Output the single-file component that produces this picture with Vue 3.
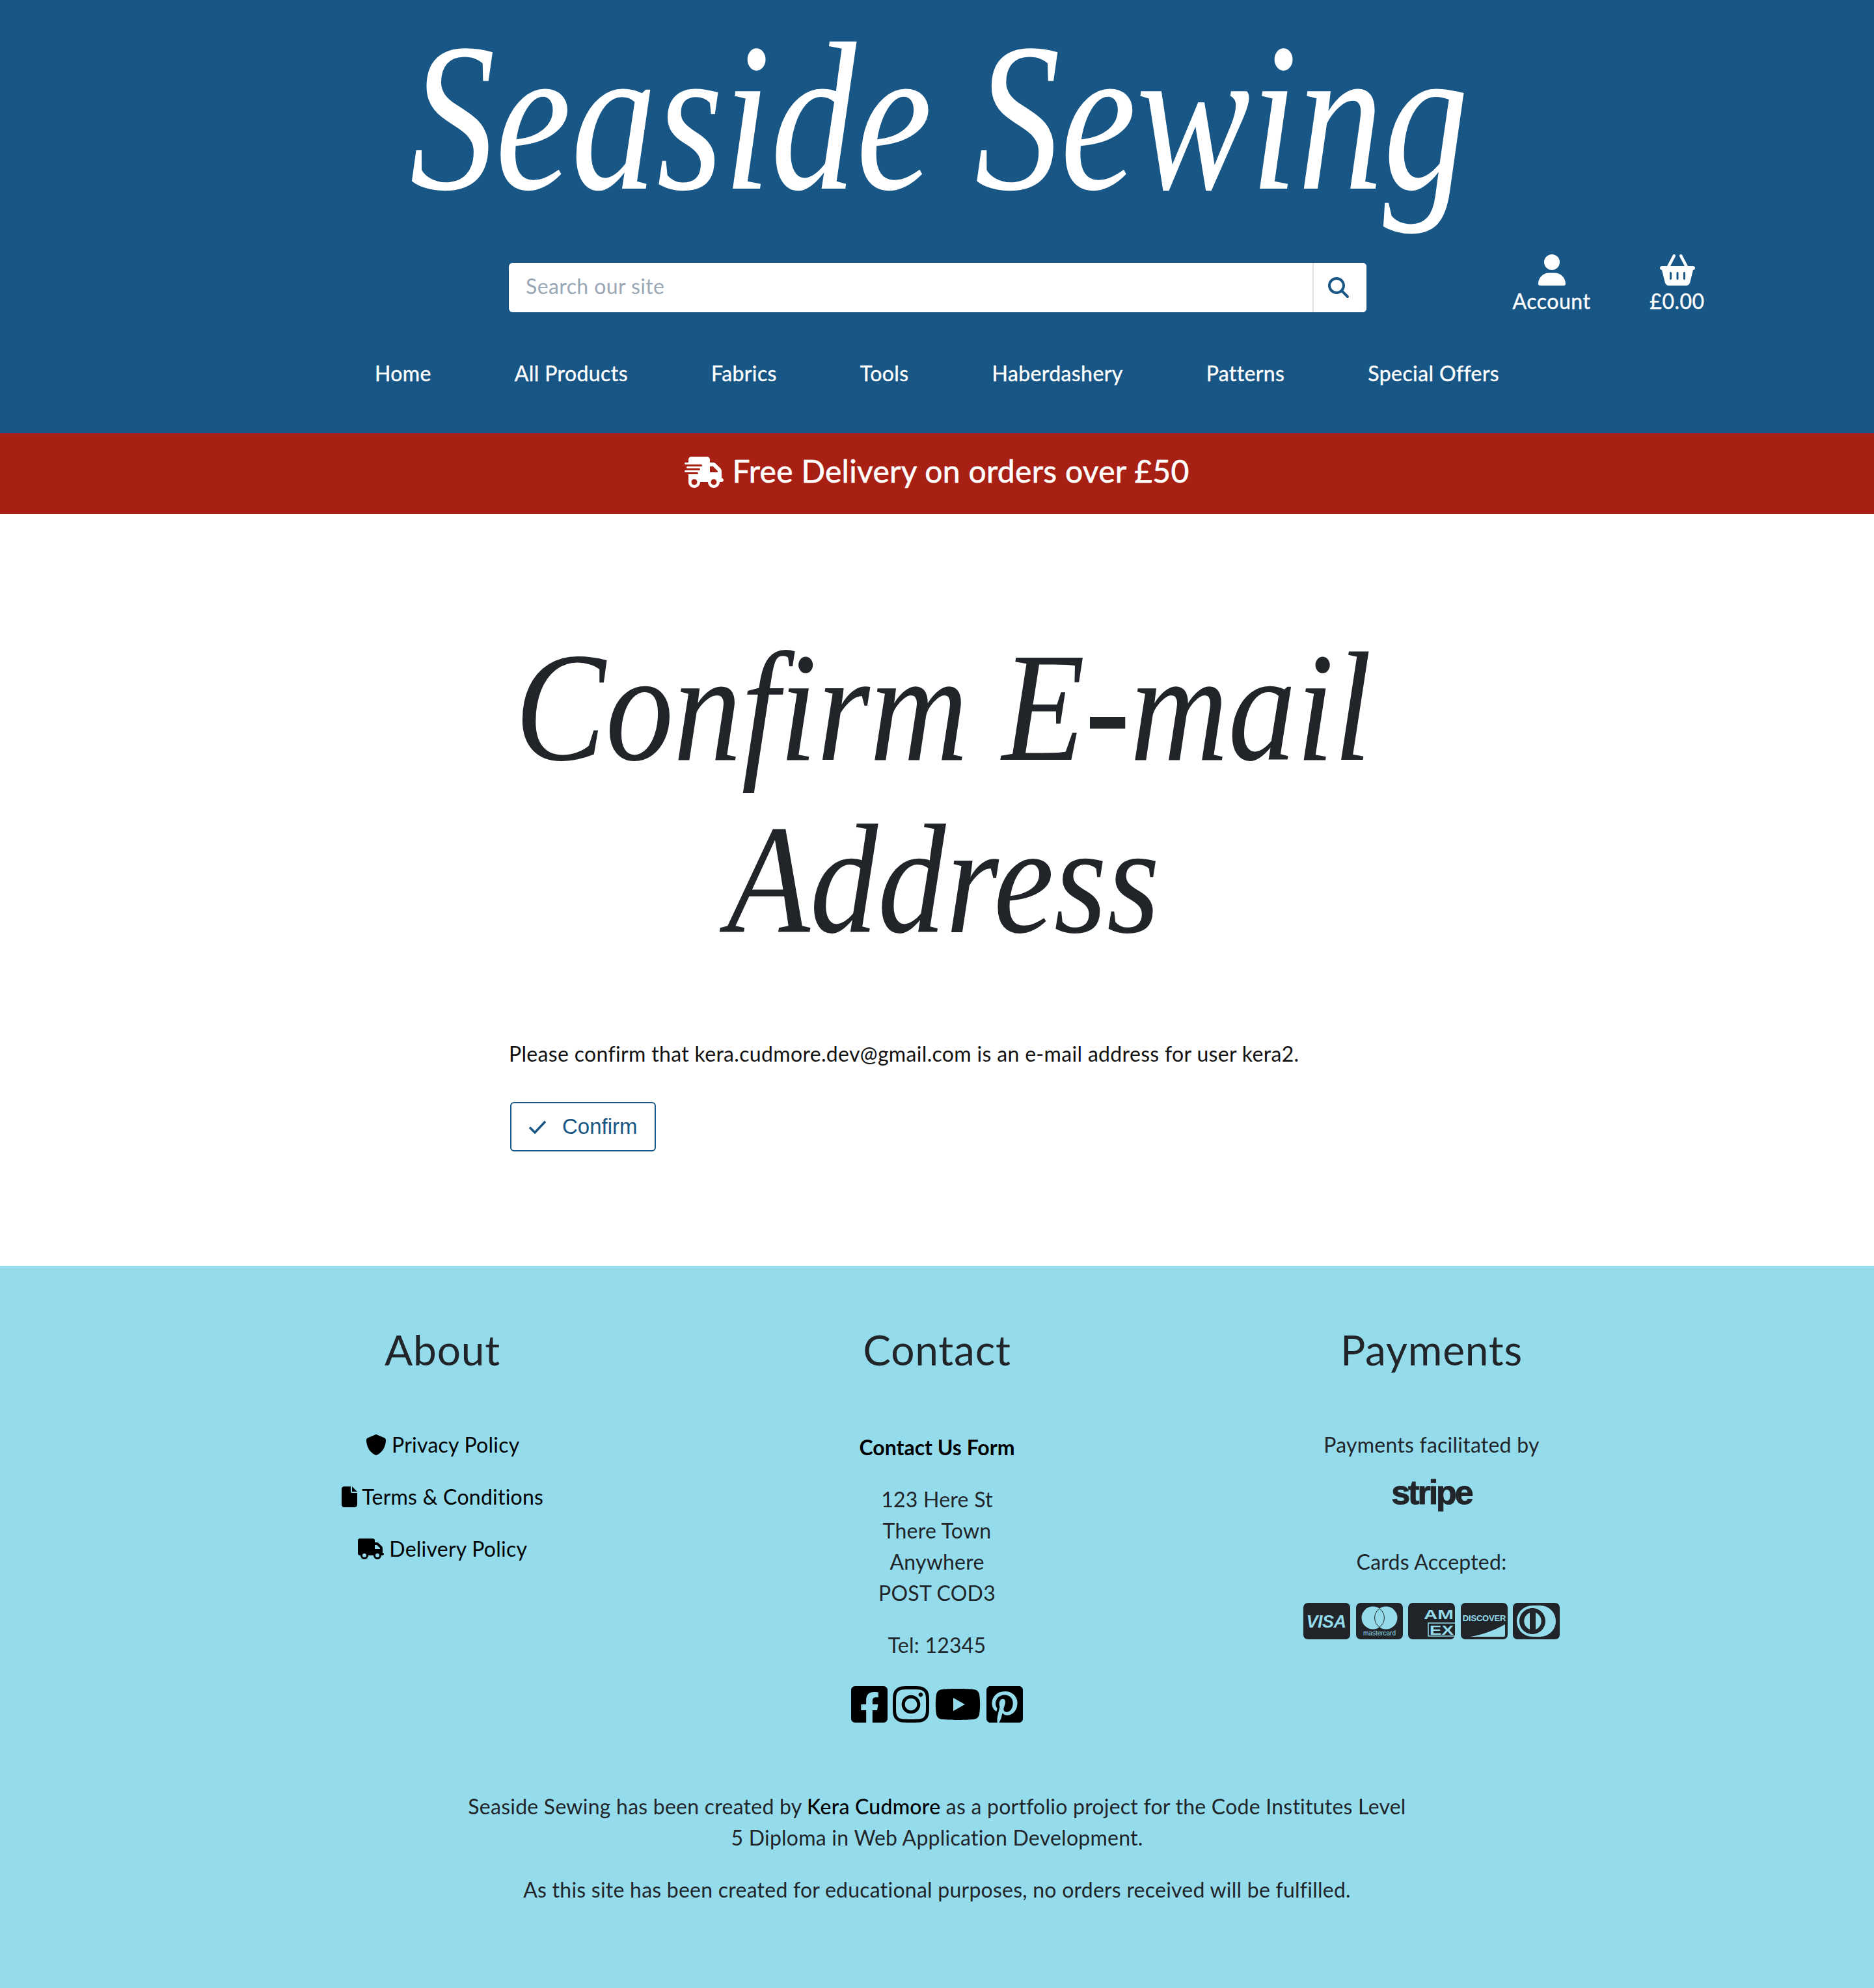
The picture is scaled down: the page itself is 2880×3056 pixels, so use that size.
<script setup>
const navItems = ['Home', 'All Products', 'Fabrics', 'Tools', 'Haberdashery', 'Patterns', 'Special Offers']
</script>

<template>
  <div class="page">
    <header class="site-header">
      <div class="logo-row"><a class="logo">Seaside Sewing</a></div>
      <div class="tools">
        <form class="search" @submit.prevent>
          <input class="search-input" type="text" placeholder="Search our site" />
          <button class="search-btn" type="button" aria-label="Search">
            <svg viewBox="0 0 512 512" class="search-icon"><path d="M416 208c0 45.9-14.9 88.3-40 122.7L502.6 457.4c12.5 12.5 12.5 32.8 0 45.3s-32.8 12.5-45.3 0L330.7 376c-34.4 25.2-76.8 40-122.7 40C93.1 416 0 322.9 0 208S93.1 0 208 0S416 93.1 416 208zM208 352a144 144 0 1 0 0-288 144 144 0 1 0 0 288z"/></svg>
          </button>
        </form>
        <div class="actions">
          <a class="action">
            <svg viewBox="0 0 448 512" class="action-icon user"><path d="M224 256A128 128 0 1 0 224 0a128 128 0 1 0 0 256zm-45.7 48C79.8 304 0 383.8 0 482.3C0 498.7 13.3 512 29.7 512H418.3c16.4 0 29.7-13.3 29.7-29.7C448 383.8 368.2 304 269.7 304H178.3z"/></svg>
            <span>Account</span>
          </a>
          <a class="action">
            <svg viewBox="0 0 576 512" class="action-icon basket"><path d="M253.3 35.1c6.1-11.8 1.5-26.3-10.2-32.4s-26.3-1.5-32.4 10.2L117.6 192H32c-17.7 0-32 14.3-32 32s14.3 32 32 32L83.9 463.5C91 492 116.6 512 146 512H430c29.4 0 55-20 62.1-48.5L544 256c17.7 0 32-14.3 32-32s-14.3-32-32-32H458.4L365.3 12.9C359.2 1.2 344.7-3.4 332.9 2.7s-16.3 20.6-10.2 32.4L404.3 192H171.7L253.3 35.1zM192 304v96c0 8.8-7.2 16-16 16s-16-7.2-16-16V304c0-8.8 7.2-16 16-16s16 7.2 16 16zm96-16c8.8 0 16 7.2 16 16v96c0 8.8-7.2 16-16 16s-16-7.2-16-16V304c0-8.8 7.2-16 16-16zm128 16v96c0 8.8-7.2 16-16 16s-16-7.2-16-16V304c0-8.8 7.2-16 16-16s16 7.2 16 16z"/></svg>
            <span>£0.00</span>
          </a>
        </div>
      </div>
      <nav class="nav">
        <a v-for="item in navItems" :key="item" class="nav-link">{{ item }}</a>
      </nav>
    </header>

    <div class="banner">
      <svg viewBox="0 0 640 512" class="banner-icon"><path d="M112 0C85.5 0 64 21.5 64 48V96H16c-8.8 0-16 7.2-16 16s7.2 16 16 16H64 272c8.8 0 16 7.2 16 16s-7.2 16-16 16H64 48c-8.8 0-16 7.2-16 16s7.2 16 16 16H64 240c8.8 0 16 7.2 16 16s-7.2 16-16 16H64 16c-8.8 0-16 7.2-16 16s7.2 16 16 16H64 208c8.8 0 16 7.2 16 16s-7.2 16-16 16H64V416c0 53 43 96 96 96s96-43 96-96H384c0 53 43 96 96 96s96-43 96-96h32c17.7 0 32-14.3 32-32s-14.3-32-32-32V288 256 237.3c0-17-6.7-33.3-18.7-45.3L512 114.7c-12-12-28.3-18.7-45.3-18.7H416V48c0-26.5-21.5-48-48-48H112zM544 237.3V256H416V160h50.7L544 237.3zM160 368a48 48 0 1 1 0 96 48 48 0 1 1 0-96zm272 48a48 48 0 1 1 96 0 48 48 0 1 1 -96 0z"/></svg>
      <span class="banner-text">Free Delivery on orders over £50</span>
    </div>

    <main class="main">
      <h1 class="title"><span class="title-text">Confirm E-mail<br />Address</span></h1>
      <p class="message">Please confirm that kera.cudmore.dev@gmail.com is an e-mail address for user kera2.</p>
      <button class="confirm" type="button">
        <svg viewBox="0 0 28 22" class="check"><path d="M2 12l8 8L26 3" /></svg>
        <span>Confirm</span>
      </button>
    </main>

    <footer class="footer">
      <div class="columns">
        <section class="col">
          <h2>About</h2>
          <ul class="links">
            <li><svg viewBox="0 0 512 512" class="ico"><path d="M256 0c4.6 0 9.2 1 13.4 2.9L457.7 82.8c22 9.3 38.4 31 38.3 57.2c-.5 99.2-41.3 280.7-213.6 363.2c-16.7 8-36.1 8-52.8 0C57.3 420.7 16.5 239.2 16 140c-.1-26.2 16.3-47.9 38.3-57.2L242.7 2.9C246.8 1 251.4 0 256 0z"/></svg> Privacy Policy</li>
            <li><svg viewBox="0 0 384 512" class="ico"><path d="M0 64C0 28.7 28.7 0 64 0H224V128c0 17.7 14.3 32 32 32H384V448c0 35.3-28.7 64-64 64H64c-35.3 0-64-28.7-64-64V64zm384 64H256V0L384 128z"/></svg> Terms &amp; Conditions</li>
            <li><svg viewBox="0 0 640 512" class="ico"><path d="M48 0C21.5 0 0 21.5 0 48V368c0 26.5 21.5 48 48 48H64c0 53 43 96 96 96s96-43 96-96H384c0 53 43 96 96 96s96-43 96-96h32c17.7 0 32-14.3 32-32s-14.3-32-32-32V288 256 237.3c0-17-6.7-33.3-18.7-45.3L512 114.7c-12-12-28.3-18.7-45.3-18.7H416V48c0-26.5-21.5-48-48-48H48zM416 160h50.7L544 237.3V256H416V160zM112 416a48 48 0 1 1 96 0 48 48 0 1 1 -96 0zm368-48a48 48 0 1 1 0 96 48 48 0 1 1 0-96z"/></svg> Delivery Policy</li>
          </ul>
        </section>

        <section class="col">
          <h2>Contact</h2>
          <p class="contact-link">Contact Us Form</p>
          <p class="block">123 Here St<br />There Town<br />Anywhere<br />POST COD3</p>
          <p class="block">Tel: 12345</p>
          <div class="social">
            <svg viewBox="0 0 448 512"><path d="M400 32H48A48 48 0 0 0 0 80v352a48 48 0 0 0 48 48h137.25V327.69h-63V256h63v-54.64c0-62.15 37-96.48 93.67-96.48 27.14 0 55.52 4.84 55.52 4.84v61h-31.27c-30.81 0-40.42 19.12-40.42 38.73V256h68.78l-11 71.69h-57.78V480H400a48 48 0 0 0 48-48V80a48 48 0 0 0-48-48z"/></svg>
            <svg viewBox="0 0 448 512"><path d="M224.1 141c-63.6 0-114.9 51.3-114.9 114.9s51.3 114.9 114.9 114.9S339 319.5 339 255.9 287.7 141 224.1 141zm0 189.6c-41.1 0-74.7-33.5-74.7-74.7s33.5-74.7 74.7-74.7 74.7 33.5 74.7 74.7-33.6 74.7-74.7 74.7zm146.4-194.3c0 14.9-12 26.8-26.8 26.8-14.9 0-26.8-12-26.8-26.8s12-26.8 26.8-26.8 26.8 12 26.8 26.8zm76.1 27.2c-1.7-35.9-9.9-67.7-36.2-93.9-26.2-26.2-58-34.4-93.9-36.2-37-2.1-147.9-2.1-184.9 0-35.8 1.7-67.6 9.9-93.9 36.1s-34.4 58-36.2 93.9c-2.1 37-2.1 147.9 0 184.9 1.7 35.9 9.9 67.7 36.2 93.9s58 34.4 93.9 36.2c37 2.1 147.9 2.1 184.9 0 35.9-1.7 67.7-9.9 93.9-36.2 26.2-26.2 34.4-58 36.2-93.9 2.1-37 2.1-147.8 0-184.8zM398.8 388c-7.8 19.6-22.9 34.7-42.6 42.6-29.5 11.7-99.5 9-132.1 9s-102.7 2.6-132.1-9c-19.6-7.8-34.7-22.9-42.6-42.6-11.7-29.5-9-99.5-9-132.1s-2.6-102.7 9-132.1c7.8-19.6 22.9-34.7 42.6-42.6 29.5-11.7 99.5-9 132.1-9s102.7-2.6 132.1 9c19.6 7.8 34.7 22.9 42.6 42.6 11.7 29.5 9 99.5 9 132.1s2.7 102.7-9 132.1z"/></svg>
            <svg viewBox="0 0 576 512" class="wide"><path d="M549.655 124.083c-6.281-23.65-24.787-42.276-48.284-48.597C458.781 64 288 64 288 64S117.22 64 74.629 75.486c-23.497 6.322-42.003 24.947-48.284 48.597-11.412 42.867-11.412 132.305-11.412 132.305s0 89.438 11.412 132.305c6.281 23.65 24.787 41.5 48.284 47.821C117.22 448 288 448 288 448s170.78 0 213.371-11.486c23.497-6.321 42.003-24.171 48.284-47.821 11.412-42.867 11.412-132.305 11.412-132.305s0-89.438-11.412-132.305zm-317.51 213.508V175.185l142.739 81.205-142.739 81.201z"/></svg>
            <svg viewBox="0 0 448 512"><path d="M448 80v352c0 26.5-21.5 48-48 48H154.4c9.8-16.4 22.4-40 27.4-59.3 3-11.5 15.3-58.4 15.3-58.4 8 15.3 31.4 28.2 56.3 28.2 74.1 0 127.4-68.1 127.4-152.7 0-81.1-66.2-141.8-151.4-141.8-106 0-162.2 71.1-162.2 148.6 0 36 19.2 80.8 49.8 95.1 4.7 2.2 7.1 1.2 8.2-3.3.8-3.4 5-20.1 6.8-27.8.6-2.5.3-4.6-1.7-7-10.1-12.3-18.3-34.9-18.3-56 0-54.2 41-106.6 110.9-106.6 60.3 0 102.6 41.1 102.6 99.9 0 66.4-33.5 112.4-77.2 112.4-24.1 0-42.1-19.9-36.4-44.4 6.9-29.2 20.3-60.7 20.3-81.8 0-53-75.5-45.7-75.5 25 0 21.7 7.3 36.5 7.3 36.5-31.4 132.8-36.1 134.5-29.6 192.6l2.2.8H48c-26.5 0-48-21.5-48-48V80c0-26.5 21.5-48 48-48h352c26.5 0 48 21.5 48 48z"/></svg>
          </div>
        </section>

        <section class="col">
          <h2>Payments</h2>
          <p class="pay-line">Payments facilitated by</p>
          <p class="stripe">stripe</p>
          <p class="pay-line cards-label">Cards Accepted:</p>
          <div class="cards">
            <svg viewBox="0 0 72 56">
              <rect width="72" height="56" rx="7" class="card-bg" />
              <text x="35" y="38" text-anchor="middle" class="card-text visa">VISA</text>
            </svg>
            <svg viewBox="0 0 72 56">
              <rect width="72" height="56" rx="7" class="card-bg" />
              <circle cx="26" cy="23" r="17.5" class="card-fill" />
              <circle cx="46" cy="23" r="17.5" class="card-fill" />
              <path d="M36 8.7A17.5 17.5 0 0 1 36 37.3A17.5 17.5 0 0 1 36 8.7z" class="card-overlap" />
              <text x="36" y="50" text-anchor="middle" class="card-text mc">mastercard</text>
            </svg>
            <svg viewBox="0 0 72 56">
              <rect width="72" height="56" rx="7" class="card-bg" />
              <text x="24" y="25" textLength="46" lengthAdjust="spacingAndGlyphs" class="card-text amex">AM</text>
              <rect x="31" y="31" width="44" height="20" class="card-box" />
              <text x="33" y="49" textLength="37" lengthAdjust="spacingAndGlyphs" class="card-text amex">EX</text>
            </svg>
            <svg viewBox="0 0 72 56">
              <rect width="72" height="56" rx="7" class="card-bg" />
              <text x="36" y="28" text-anchor="middle" class="card-text disc">DISCOVER</text>
              <path d="M15 52C36 48 52 42 68 33V50a2 2 0 0 1-2 2z" class="card-fill" />
            </svg>
            <svg viewBox="0 0 72 56">
              <rect width="72" height="56" rx="7" class="card-bg" />
              <path fill-rule="evenodd" d="M31 4C15 4 6 16 6 28s9 24 25 24h10c16 0 25-12 25-24S57 4 41 4zM30 8c11 0 20 9 20 20s-9 20-20 20-20-9-20-20S19 8 30 8z" class="card-fill" />
              <path d="M26 15a14 14 0 0 0 0 26zM35 15v26a14 14 0 0 0 0-26z" class="card-fill" />
            </svg>
          </div>
        </section>
      </div>

      <div class="credits">
        <p>Seaside Sewing has been created by <a>Kera Cudmore</a> as a portfolio project for the Code Institutes Level<br />5 Diploma in Web Application Development.</p>
        <p>As this site has been created for educational purposes, no orders received will be fulfilled.</p>
      </div>
    </footer>
  </div>
</template>

<style>
html, body { margin: 0; padding: 0; }
</style>

<style scoped>
.page {
  width: 2880px;
  font-family: "Lato", "Noto Sans", sans-serif;
  font-size: 32px;
  line-height: 48px;
  color: #212529;
}

.site-header {
  background: #185686;
  height: 666px;
  color: #fff;
  overflow: hidden;
}

.logo-row {
  height: 390px;
  display: flex;
  justify-content: center;
  align-items: flex-start;
  padding-left: 8px;
}
.logo {
  display: inline-block;
  flex: none;
  font-family: "Liberation Serif", serif;
  font-style: italic;
  font-size: 326px;
  line-height: 361px;
  white-space: nowrap;
  transform: scaleX(0.806);
}

.tools {
  display: flex;
  align-items: center;
  padding-left: 782px;
  margin-top: 1px;
}
.search {
  display: flex;
  width: 1318px;
  height: 76px;
  background: #fff;
  border-radius: 6px;
  overflow: hidden;
}
.search-input {
  flex: 1;
  border: 0;
  outline: 0;
  padding: 0 26px 4px;
  font: inherit;
  letter-spacing: 0.4px;
  color: #212529;
  background: transparent;
}
.search-input::placeholder { color: #9aa7b4; opacity: 1; }
.search-btn {
  width: 83px;
  border: 0;
  border-left: 2px solid #dee2e6;
  background: #fff;
  display: flex;
  align-items: center;
  justify-content: center;
  padding: 0 6px 0 0;
}
.search-icon { width: 32px; height: 32px; fill: #185686; }

.actions {
  display: flex;
  margin-left: 188px;
  margin-bottom: 6px;
}
.action {
  width: 193px;
  display: flex;
  flex-direction: column;
  align-items: center;
  color: #fff;
  letter-spacing: 0.5px;
  -webkit-text-stroke: 0.4px #fff;
}
.action-icon { height: 48px; fill: #fff; display: block; }
.action-icon.user { width: 42px; }
.action-icon.basket { width: 54px; }

.nav {
  display: flex;
  justify-content: center;
  gap: 128px;
  margin-top: 57px;
}
.nav-link {
  color: #fff;
  line-height: 48px;
  letter-spacing: 0.4px;
  -webkit-text-stroke: 0.4px #fff;
}

.banner {
  background: #a82014;
  height: 124px;
  display: flex;
  align-items: center;
  justify-content: center;
  gap: 13px;
  color: #fff;
  font-size: 48px;
}
.banner-icon { width: 60px; height: 48px; fill: #fff; margin-bottom: 4px; }
.banner-text {
  padding-bottom: 8px;
  letter-spacing: 0.3px;
  -webkit-text-stroke: 0.6px #fff;
}

.main {
  height: 1156px;
  box-sizing: border-box;
  padding: 165px 0 0 782px;
}
.title {
  width: 1316px;
  margin: 0;
  padding-left: 10px;
  display: flex;
  justify-content: center;
  font-family: "Liberation Serif", serif;
  font-style: italic;
  font-weight: 400;
  font-size: 240px;
  line-height: 265px;
  color: #212529;
}
.title-text {
  flex: none;
  display: block;
  text-align: center;
  white-space: nowrap;
  transform: scaleX(0.87);
}
.message {
  margin: 111px 0 0;
  color: #111;
  white-space: nowrap;
  letter-spacing: 0.33px;
}
.confirm {
  margin: 50px 0 0 2px;
  width: 224px;
  height: 76px;
  border: 2px solid #185686;
  border-radius: 6px;
  background: #fff;
  color: #185686;
  font-family: "Liberation Sans", sans-serif;
  font-size: 33px;
  display: flex;
  align-items: center;
  gap: 24px;
  padding: 0 0 0 26px;
}
.check { width: 28px; height: 22px; fill: none; stroke: #185686; stroke-width: 3.4; }

.footer {
  background: #94dcec;
  height: 1110px;
  box-sizing: border-box;
  padding-top: 90px;
  letter-spacing: 0.24px;
}
.columns {
  display: grid;
  grid-template-columns: repeat(3, 760px);
  justify-content: center;
  text-align: center;
}
.col h2 {
  margin: 0 0 84px;
  font-size: 64px;
  line-height: 77px;
  font-weight: 400;
  letter-spacing: 0.8px;
}
.links {
  list-style: none;
  margin: 0;
  padding: 0;
  display: flex;
  flex-direction: column;
  gap: 32px;
  color: #000;
}
.ico { height: 32px; width: auto; fill: #000; vertical-align: -4px; }
.contact-link {
  margin: 0 0 32px;
  padding-top: 4px;
  color: #000;
  font-weight: 700;
  letter-spacing: 0;
}
.block { margin: 0 0 32px; }
.social {
  display: flex;
  justify-content: center;
  gap: 8px;
  margin-top: 35px;
}
.social svg { width: 56px; height: 64px; fill: #000; }
.social svg.wide { width: 72px; }

.pay-line { margin: 0; }
.stripe {
  margin: 0;
  height: 98px;
  line-height: 98px;
  font-family: "Liberation Sans", sans-serif;
  font-weight: 700;
  font-size: 52px;
  letter-spacing: -3px;
  -webkit-text-stroke: 1px #212529;
}
.cards-label { margin-top: 34px; }
.cards {
  display: flex;
  justify-content: center;
  gap: 8.5px;
  margin-top: 39px;
}
.cards svg { width: 72px; height: 56px; }
.card-bg { fill: #212529; }
.card-fill { fill: #94dcec; }
.card-overlap { fill: #94dcec; stroke: #212529; stroke-width: 1; }
.card-box { fill: none; stroke: #94dcec; stroke-width: 1.5; }
.card-text {
  fill: #94dcec;
  font-family: "Liberation Sans", sans-serif;
  font-weight: 700;
  letter-spacing: 0;
}
.visa { font-size: 27px; font-style: italic; letter-spacing: -0.5px; }
.mc { font-size: 10px; font-weight: 400; }
.amex { font-size: 21px; }
.disc { font-size: 13px; letter-spacing: -0.2px; }

.credits {
  margin-top: 101px;
  text-align: center;
}
.credits p { margin: 0 0 32px; white-space: nowrap; }
.credits a { color: #000; font-weight: 500; }
</style>
